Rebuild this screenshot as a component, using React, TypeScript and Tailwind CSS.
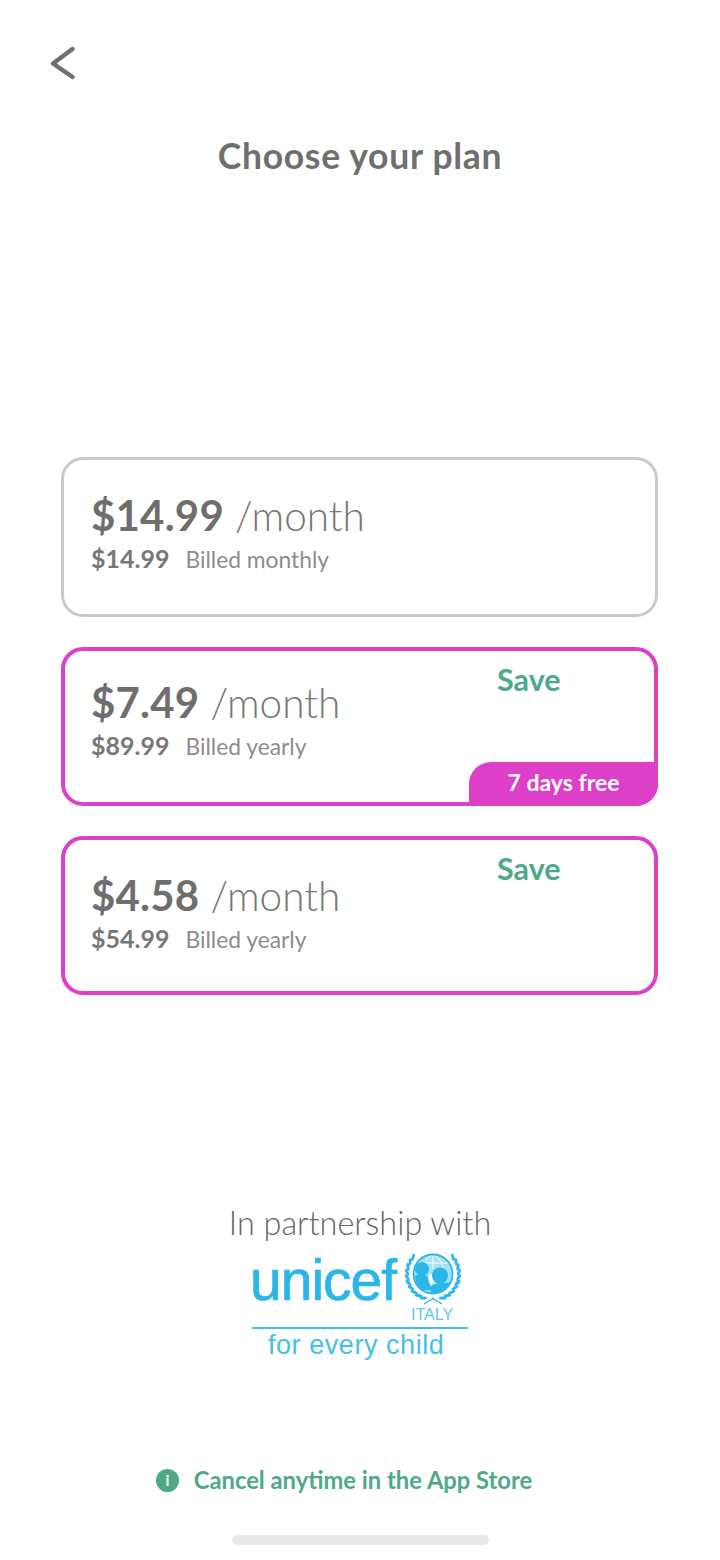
import React from 'react'

type Plan = {
  price: string
  billedTotal: string
  billedLabel: string
  save?: boolean
  trial?: string
  frame: string
}

const plans: Plan[] = [
  { price: '$14.99', billedTotal: '$14.99', billedLabel: 'Billed monthly', frame: 'h-[160px] pt-[33px] pl-[27px] border-[3px] border-[#c9c9c9]' },
  { price: '$7.49', billedTotal: '$89.99', billedLabel: 'Billed yearly', save: true, trial: '7 days free', frame: 'h-[159px] pt-[29px] pl-[26px] border-[4px] border-[#dd3fc8]' },
  { price: '$4.58', billedTotal: '$54.99', billedLabel: 'Billed yearly', save: true, frame: 'h-[159px] pt-[33px] pl-[26px] border-[4px] border-[#dd3fc8]' },
]

// wreath leaves, degrees around the globe centre (clockwise from +x)
const leafAngles = [112, 124, 136, 148, 160, 172, 184, 196, 208, 220]

function BackIcon() {
  return (
    <svg width="26" height="34" viewBox="0 0 26 34" fill="none" aria-hidden="true">
      <path d="M23.5 3L4 17.5L23.5 31" stroke="#6f6f6f" strokeWidth="4.4" strokeLinecap="round" strokeLinejoin="round" />
    </svg>
  )
}

function PlanCard({ plan }: { plan: Plan }) {
  return (
    <div className={`relative rounded-[22px] bg-white ${plan.frame}`}>
      <div className="flex items-baseline h-[44px] leading-[44px]">
        <span className="text-[42px] font-bold tracking-[0.2px] text-[#6e6e6e]">{plan.price}</span>
        <span className="ml-[11px] text-[40.5px] font-light text-[#777777]">/month</span>
      </div>
      <div className="flex items-baseline h-[30px] leading-[30px] mt-[6px]">
        <span className="text-[25px] font-bold text-[#777777]">{plan.billedTotal}</span>
        <span className="ml-[16px] text-[22.8px] text-[#8c8c8c]">{plan.billedLabel}</span>
      </div>
      {plan.save && (
        <span className="absolute left-[432px] top-[10px] text-[30.5px] leading-[36px] font-bold text-[#4fa987]">Save</span>
      )}
      {plan.trial && (
        <span className="absolute -right-[4px] -bottom-[4px] flex h-[44px] w-[189px] items-center justify-center rounded-tl-[22px] rounded-br-[22px] pb-[3px] bg-[#dd3fc8] text-[23px] font-bold text-white">
          {plan.trial}
        </span>
      )}
    </div>
  )
}

// Globe with mother and child inside the olive wreath
function UnicefEmblem() {
  const cx = 31
  const cy = 25
  const leaves = leafAngles.map(deg => {
    const rad = (deg * Math.PI) / 180
    return { deg, x: 26 * Math.cos(rad), y: 26 * Math.sin(rad) }
  })
  return (
    <svg width="62" height="62" viewBox="0 0 62 62" fill="none" aria-hidden="true">
      <circle cx={cx} cy={cy} r="19.5" fill="#a5e0f6" />
      <path d="M15 14H47M31 5.5V20M31 5.5C24 9 22 14 22 18M31 5.5C38 9 40 14 41 18" stroke="#fff" strokeWidth="1" />
      <circle cx={cx} cy={cy} r="19.5" stroke="#2bb6e8" strokeWidth="1.8" />
      <circle cx="20" cy="20" r="7" fill="#2bb6e8" />
      <path d="M13 27C17 24 25 25 27 30L29 41L20 41C16 37 13 32 13 27Z" fill="#2bb6e8" />
      <path d="M27.5 25C25.5 29 26 33 29 36C33 33 33 29 31 25Z" fill="#fff" />
      <circle cx="38" cy="26.5" r="8" fill="#2bb6e8" />
      <path d="M28 38C31 34 42 33 48.5 34C46 41 36 45 29 44Z" fill="#2bb6e8" />
      {leaves.map(leaf => (
        <g key={leaf.deg}>
          <ellipse cx={cx + leaf.x} cy={cy + leaf.y} rx="3.9" ry="1.5" fill="#2bb6e8" transform={`rotate(${leaf.deg + 65} ${cx + leaf.x} ${cy + leaf.y})`} />
          <ellipse cx={cx - leaf.x} cy={cy + leaf.y} rx="3.9" ry="1.5" fill="#2bb6e8" transform={`rotate(${-leaf.deg - 65} ${cx - leaf.x} ${cy + leaf.y})`} />
        </g>
      ))}
      <path d="M22 55L32 49M40 55L30 49" stroke="#2bb6e8" strokeWidth="1.4" />
    </svg>
  )
}

function UnicefLogo() {
  return (
    <div className="relative w-[216px] h-[104px] font-['Liberation_Sans',Arial,sans-serif] text-[#2bb6e8]">
      <span className="absolute left-[-2px] top-[-9px] text-[57px] leading-[66px] tracking-[-1px] [-webkit-text-stroke:0.7px_#2bb6e8]">unicef</span>
      <div className="absolute left-[150px] top-[-7px]">
        <UnicefEmblem />
      </div>
      <span className="absolute left-[159px] top-[49px] text-[16px] leading-[20px] text-[#5cc8ee]">ITALY</span>
      <div className="absolute left-0 top-[71px] h-[1.5px] w-[216px] bg-[#45c0ea]" />
      <span className="absolute left-[16px] top-[73px] text-[27px] leading-[32px] tracking-[0.55px] text-[#45c0ea]">for every child</span>
    </div>
  )
}

export default function App() {
  return (
    <div className="flex flex-col h-[1560px] w-[720px] bg-white font-['Lato','Noto_Sans',sans-serif]">
      <div className="pl-[49px] pt-[46px] h-[136px]">
        <BackIcon />
      </div>

      <h1 className="text-center text-[35.5px] leading-[40px] font-bold text-[#6f6f6f] tracking-[0.7px]">Choose your plan</h1>

      <div className="flex flex-col gap-[30px] pl-[61px] pr-[62px] pt-[281px]">
        {plans.map(plan => (
          <PlanCard key={plan.price} plan={plan} />
        ))}
      </div>

      <div className="flex flex-col items-center pt-[208px]">
        <p className="text-[32.4px] leading-[40px] font-light text-[#666666]">In partnership with</p>
        <div className="mt-[13px]">
          <UnicefLogo />
        </div>
      </div>

      <div className="flex items-center justify-center gap-[15px] pt-[105px] pr-[32px]">
        <span className="flex h-[23px] w-[23px] items-center justify-center rounded-full bg-[#4fa987] text-[15px] leading-none font-bold text-white">i</span>
        <span className="text-[23.75px] leading-[30px] font-bold text-[#4fa987]">Cancel anytime in the App Store</span>
      </div>

      <div className="mt-[40px] mx-auto h-[10px] w-[257px] rounded-full bg-[#e9e9e9]" />
    </div>
  )
}
